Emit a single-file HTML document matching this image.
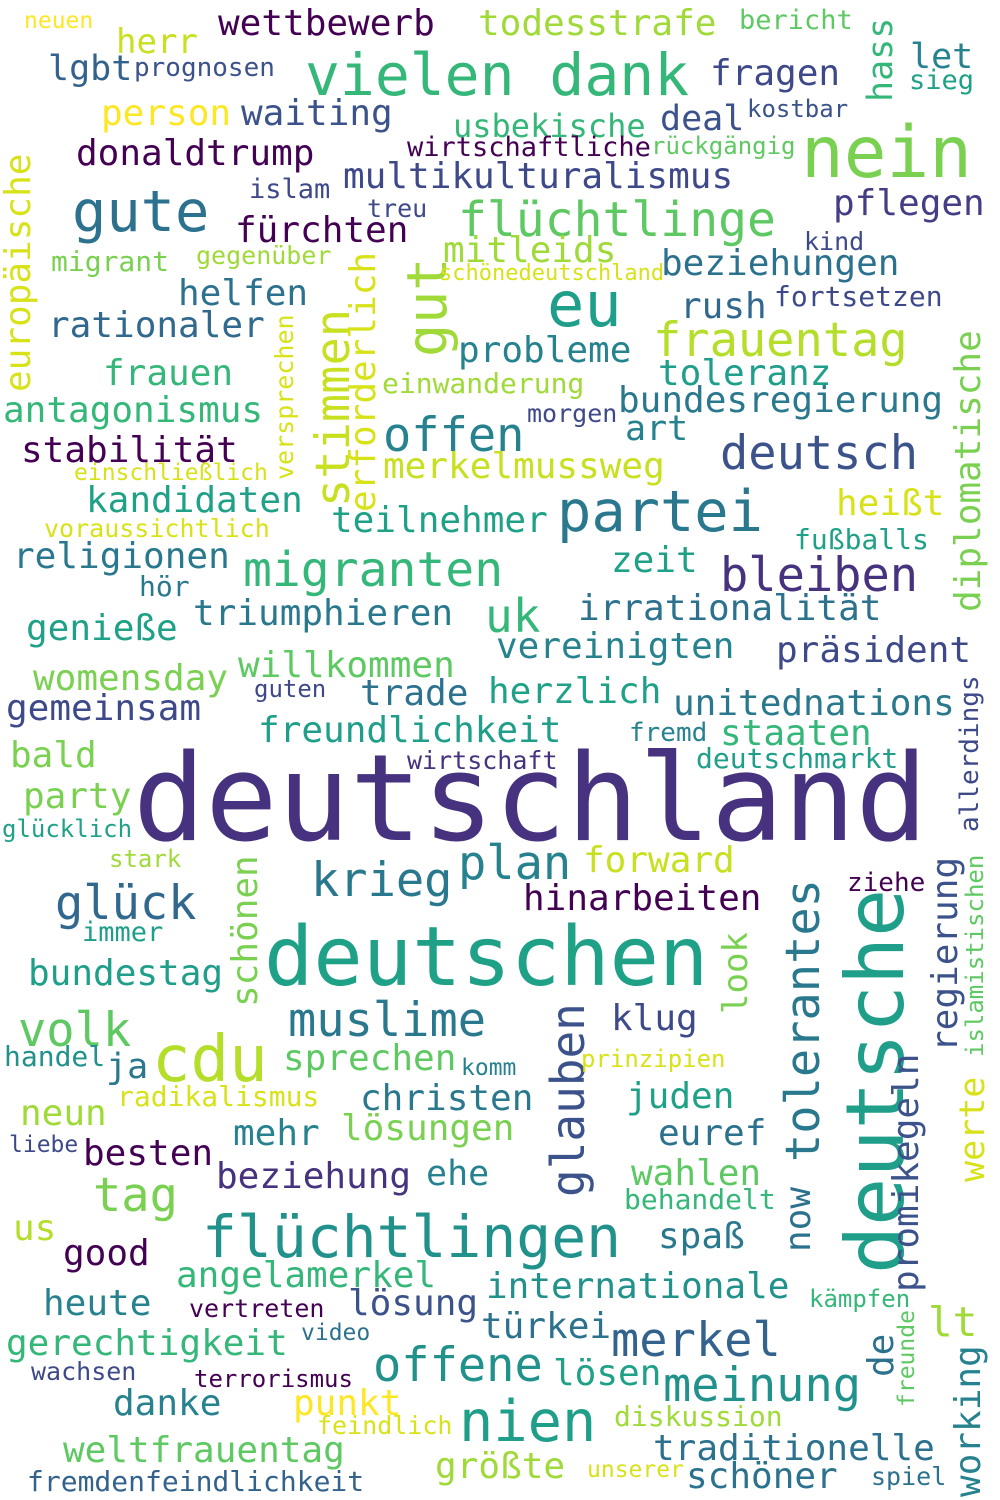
<!DOCTYPE html>
<html><head><meta charset="utf-8"><style>
html,body{margin:0;padding:0;background:#fff;}
body{width:1000px;height:1500px;position:relative;overflow:hidden;font-family:"DejaVu Sans Mono","Liberation Mono",monospace;}
div{position:absolute;line-height:1;white-space:nowrap;margin-top:2px;}
.v{transform-origin:0 0;transform:rotate(-90deg);}
</style></head><body>
<div style="left:133px;top:738px;font-size:120px;color:#46327e">deutschland</div>
<div style="left:264px;top:915px;font-size:82px;color:#1fa187">deutschen</div>
<div style="left:305px;top:44px;font-size:58px;color:#35b779">vielen dank</div>
<div style="left:801px;top:115px;font-size:71px;color:#7ad151">nein</div>
<div style="left:72px;top:182px;font-size:57px;color:#2c728e">gute</div>
<div style="left:547px;top:272px;font-size:62px;color:#1f9e89">eu</div>
<div style="left:458px;top:194px;font-size:48px;color:#5ec962">flüchtlinge</div>
<div style="left:557px;top:482px;font-size:57px;color:#2a788e">partei</div>
<div style="left:202px;top:1206px;font-size:58px;color:#21918c">flüchtlingen</div>
<div style="left:152px;top:1026px;font-size:64px;color:#b5de2b">cdu</div>
<div style="left:459px;top:1392px;font-size:57px;color:#1f9e89">nien</div>
<div style="left:373px;top:1340px;font-size:47px;color:#21918c">offene</div>
<div style="left:288px;top:995px;font-size:47px;color:#2a788e">muslime</div>
<div style="left:311px;top:855px;font-size:47px;color:#2a788e">krieg</div>
<div style="left:55px;top:878px;font-size:47px;color:#31688e">glück</div>
<div style="left:18px;top:1005px;font-size:47px;color:#5ec962">volk</div>
<div style="left:93px;top:1170px;font-size:47px;color:#7ad151">tag</div>
<div style="left:243px;top:544px;font-size:48px;color:#35b779">migranten</div>
<div style="left:383px;top:410px;font-size:47px;color:#26828e">offen</div>
<div style="left:720px;top:428px;font-size:47px;color:#3b528b">deutsch</div>
<div style="left:720px;top:550px;font-size:47px;color:#46327e">bleiben</div>
<div style="left:458px;top:838px;font-size:47px;color:#26828e">plan</div>
<div style="left:653px;top:315px;font-size:47px;color:#b5de2b">frauentag</div>
<div style="left:485px;top:591px;font-size:46px;color:#35b779">uk</div>
<div style="left:663px;top:1360px;font-size:47px;color:#21918c">meinung</div>
<div style="left:611px;top:1315px;font-size:47px;color:#33638d">merkel</div>
<div style="left:928px;top:1300px;font-size:41px;color:#a0da39">lt</div>

<div class="v" style="left:836px;top:1272px;font-size:80px;color:#1f9e89">deutsche</div>
<div class="v" style="left:400px;top:355px;font-size:55px;color:#a0da39">gut</div>
<div class="v" style="left:310px;top:505px;font-size:47px;color:#c8e020">stimmen</div>
<div class="v" style="left:780px;top:1160px;font-size:47px;color:#2a788e">tolerantes</div>
<div class="v" style="left:545px;top:1195px;font-size:46px;color:#3b528b">glauben</div>
<div class="v" style="left:951px;top:610px;font-size:36px;color:#7ad151">diplomatische</div>
<div class="v" style="left:1px;top:390px;font-size:36px;color:#d8e219">europäische</div>
<div class="v" style="left:346px;top:510px;font-size:36px;color:#d8e219">erforderlich</div>
<div class="v" style="left:864px;top:100px;font-size:35px;color:#35b779">hass</div>
<div class="v" style="left:272px;top:478px;font-size:25px;color:#d8e219">versprechen</div>
<div class="v" style="left:957px;top:830px;font-size:26px;color:#3e4989">allerdings</div>
<div class="v" style="left:963px;top:1055px;font-size:24px;color:#5ec962">islamistischen</div>
<div class="v" style="left:928px;top:1050px;font-size:36px;color:#3b528b">regierung</div>
<div class="v" style="left:228px;top:1005px;font-size:36px;color:#7ad151">schönen</div>
<div class="v" style="left:719px;top:1012px;font-size:34px;color:#7ad151">look</div>
<div class="v" style="left:889px;top:1290px;font-size:36px;color:#3b528b">promikegeln</div>
<div class="v" style="left:956px;top:1180px;font-size:35px;color:#d8e219">werte</div>
<div class="v" style="left:781px;top:1250px;font-size:36px;color:#2c728e">now</div>
<div class="v" style="left:864px;top:1375px;font-size:36px;color:#2c728e">de</div>
<div class="v" style="left:896px;top:1405px;font-size:23px;color:#5ec962">freunde</div>
<div class="v" style="left:951px;top:1495px;font-size:36px;color:#26828e">working</div>

<div style="left:218px;top:4px;font-size:36px;color:#440154">wettbewerb</div>
<div style="left:478px;top:4px;font-size:36px;color:#a0da39">todesstrafe</div>
<div style="left:116px;top:23px;font-size:34px;color:#c8e020">herr</div>
<div style="left:739px;top:5px;font-size:27px;color:#5ec962">bericht</div>
<div style="left:24px;top:8px;font-size:23px;color:#fde725">neuen</div>
<div style="left:910px;top:38px;font-size:35px;color:#26828e">let</div>
<div style="left:909px;top:65px;font-size:27px;color:#1fa187">sieg</div>
<div style="left:48px;top:50px;font-size:35px;color:#33638d">lgbt</div>
<div style="left:134px;top:53px;font-size:26px;color:#3b528b">prognosen</div>
<div style="left:710px;top:54px;font-size:36px;color:#3e4989">fragen</div>
<div style="left:101px;top:94px;font-size:36px;color:#fde725">person</div>
<div style="left:241px;top:94px;font-size:36px;color:#3b528b">waiting</div>
<div style="left:453px;top:108px;font-size:32px;color:#35b779">usbekische</div>
<div style="left:660px;top:100px;font-size:35px;color:#3b528b">deal</div>
<div style="left:747px;top:95px;font-size:24px;color:#3b528b">kostbar</div>
<div style="left:76px;top:134px;font-size:36px;color:#440154">donaldtrump</div>
<div style="left:407px;top:132px;font-size:27px;color:#440154">wirtschaftliche</div>
<div style="left:651px;top:132px;font-size:24px;color:#5ec962">rückgängig</div>
<div style="left:249px;top:174px;font-size:27px;color:#3e4989">islam</div>
<div style="left:343px;top:157px;font-size:36px;color:#3e4989">multikulturalismus</div>
<div style="left:367px;top:194px;font-size:25px;color:#3e4989">treu</div>
<div style="left:235px;top:211px;font-size:36px;color:#440154">fürchten</div>
<div style="left:833px;top:184px;font-size:36px;color:#433e85">pflegen</div>
<div style="left:804px;top:227px;font-size:25px;color:#3e4989">kind</div>
<div style="left:51px;top:246px;font-size:28px;color:#7ad151">migrant</div>
<div style="left:196px;top:241px;font-size:25px;color:#a0da39">gegenüber</div>
<div style="left:443px;top:231px;font-size:36px;color:#a0da39">mitleids</div>
<div style="left:439px;top:261px;font-size:22px;color:#d8e219">schönedeutschland</div>
<div style="left:661px;top:244px;font-size:36px;color:#2c728e">beziehungen</div>
<div style="left:178px;top:274px;font-size:36px;color:#2c728e">helfen</div>
<div style="left:680px;top:287px;font-size:36px;color:#31688e">rush</div>
<div style="left:774px;top:281px;font-size:28px;color:#3e4989">fortsetzen</div>
<div style="left:48px;top:306px;font-size:36px;color:#31688e">rationaler</div>
<div style="left:458px;top:331px;font-size:36px;color:#26828e">probleme</div>
<div style="left:103px;top:354px;font-size:36px;color:#35b779">frauen</div>
<div style="left:658px;top:354px;font-size:36px;color:#1f9e89">toleranz</div>
<div style="left:382px;top:368px;font-size:28px;color:#a0da39">einwanderung</div>
<div style="left:618px;top:381px;font-size:36px;color:#2a788e">bundesregierung</div>
<div style="left:3px;top:391px;font-size:36px;color:#35b779">antagonismus</div>
<div style="left:527px;top:399px;font-size:25px;color:#3e4989">morgen</div>
<div style="left:625px;top:410px;font-size:35px;color:#26828e">art</div>
<div style="left:21px;top:431px;font-size:36px;color:#440154">stabilität</div>
<div style="left:74px;top:460px;font-size:23px;color:#d8e219">einschließlich</div>
<div style="left:383px;top:447px;font-size:36px;color:#c8e020">merkelmussweg</div>
<div style="left:836px;top:484px;font-size:36px;color:#d8e219">heißt</div>
<div style="left:86px;top:481px;font-size:36px;color:#1fa187">kandidaten</div>
<div style="left:331px;top:501px;font-size:36px;color:#1fa187">teilnehmer</div>
<div style="left:44px;top:514px;font-size:25px;color:#d8e219">voraussichtlich</div>
<div style="left:794px;top:524px;font-size:28px;color:#1fa187">fußballs</div>
<div style="left:13px;top:537px;font-size:36px;color:#2a788e">religionen</div>
<div style="left:611px;top:541px;font-size:36px;color:#1fa187">zeit</div>
<div style="left:139px;top:571px;font-size:28px;color:#2a788e">hör</div>
<div style="left:578px;top:589px;font-size:36px;color:#2c728e">irrationalität</div>
<div style="left:193px;top:594px;font-size:36px;color:#2a788e">triumphieren</div>
<div style="left:26px;top:609px;font-size:36px;color:#1fa187">genieße</div>
<div style="left:496px;top:627px;font-size:36px;color:#26828e">vereinigten</div>
<div style="left:776px;top:631px;font-size:36px;color:#3e4989">präsident</div>
<div style="left:238px;top:646px;font-size:36px;color:#5ec962">willkommen</div>
<div style="left:33px;top:659px;font-size:36px;color:#7ad151">womensday</div>
<div style="left:254px;top:675px;font-size:24px;color:#3e4989">guten</div>
<div style="left:360px;top:674px;font-size:36px;color:#2c728e">trade</div>
<div style="left:488px;top:672px;font-size:36px;color:#1fa187">herzlich</div>
<div style="left:673px;top:684px;font-size:36px;color:#2a788e">unitednations</div>
<div style="left:6px;top:689px;font-size:36px;color:#3e4989">gemeinsam</div>
<div style="left:258px;top:711px;font-size:36px;color:#1f9e89">freundlichkeit</div>
<div style="left:629px;top:718px;font-size:26px;color:#26828e">fremd</div>
<div style="left:720px;top:714px;font-size:36px;color:#35b779">staaten</div>
<div style="left:10px;top:736px;font-size:36px;color:#7ad151">bald</div>
<div style="left:407px;top:746px;font-size:25px;color:#46327e">wirtschaft</div>
<div style="left:696px;top:743px;font-size:28px;color:#1f9e89">deutschmarkt</div>
<div style="left:23px;top:777px;font-size:36px;color:#7ad151">party</div>
<div style="left:2px;top:815px;font-size:24px;color:#1fa187">glücklich</div>
<div style="left:109px;top:845px;font-size:24px;color:#a0da39">stark</div>
<div style="left:583px;top:841px;font-size:36px;color:#c8e020">forward</div>
<div style="left:523px;top:879px;font-size:36px;color:#440154">hinarbeiten</div>
<div style="left:847px;top:868px;font-size:26px;color:#440154">ziehe</div>
<div style="left:82px;top:917px;font-size:27px;color:#1f9e89">immer</div>
<div style="left:28px;top:954px;font-size:36px;color:#1f9e89">bundestag</div>
<div style="left:611px;top:999px;font-size:36px;color:#3e4989">klug</div>
<div style="left:4px;top:1041px;font-size:28px;color:#21918c">handel</div>
<div style="left:106px;top:1048px;font-size:35px;color:#2a788e">ja</div>
<div style="left:283px;top:1039px;font-size:36px;color:#5ec962">sprechen</div>
<div style="left:461px;top:1055px;font-size:23px;color:#26828e">komm</div>
<div style="left:581px;top:1045px;font-size:24px;color:#d8e219">prinzipien</div>
<div style="left:117px;top:1081px;font-size:28px;color:#d8e219">radikalismus</div>
<div style="left:360px;top:1079px;font-size:36px;color:#2a788e">christen</div>
<div style="left:626px;top:1077px;font-size:36px;color:#1fa187">juden</div>
<div style="left:20px;top:1094px;font-size:36px;color:#a0da39">neun</div>
<div style="left:233px;top:1114px;font-size:36px;color:#26828e">mehr</div>
<div style="left:341px;top:1109px;font-size:36px;color:#7ad151">lösungen</div>
<div style="left:658px;top:1114px;font-size:36px;color:#2c728e">euref</div>
<div style="left:9px;top:1132px;font-size:23px;color:#3e4989">liebe</div>
<div style="left:83px;top:1134px;font-size:36px;color:#440154">besten</div>
<div style="left:216px;top:1157px;font-size:36px;color:#46327e">beziehung</div>
<div style="left:426px;top:1155px;font-size:35px;color:#26828e">ehe</div>
<div style="left:631px;top:1154px;font-size:36px;color:#5ec962">wahlen</div>
<div style="left:624px;top:1184px;font-size:28px;color:#35b779">behandelt</div>
<div style="left:13px;top:1209px;font-size:36px;color:#b5de2b">us</div>
<div style="left:63px;top:1234px;font-size:36px;color:#440154">good</div>
<div style="left:658px;top:1217px;font-size:36px;color:#2a788e">spaß</div>
<div style="left:176px;top:1256px;font-size:36px;color:#35b779">angelamerkel</div>
<div style="left:486px;top:1267px;font-size:36px;color:#21918c">internationale</div>
<div style="left:43px;top:1284px;font-size:36px;color:#26828e">heute</div>
<div style="left:189px;top:1294px;font-size:25px;color:#440154">vertreten</div>
<div style="left:348px;top:1284px;font-size:36px;color:#3b528b">lösung</div>
<div style="left:809px;top:1285px;font-size:24px;color:#35b779">kämpfen</div>
<div style="left:481px;top:1307px;font-size:36px;color:#2c728e">türkei</div>
<div style="left:6px;top:1324px;font-size:36px;color:#35b779">gerechtigkeit</div>
<div style="left:301px;top:1320px;font-size:23px;color:#2c728e">video</div>
<div style="left:31px;top:1357px;font-size:25px;color:#3e4989">wachsen</div>
<div style="left:194px;top:1365px;font-size:24px;color:#440154">terrorismus</div>
<div style="left:553px;top:1354px;font-size:36px;color:#1fa187">lösen</div>
<div style="left:113px;top:1384px;font-size:36px;color:#26828e">danke</div>
<div style="left:293px;top:1384px;font-size:36px;color:#fde725">punkt</div>
<div style="left:317px;top:1411px;font-size:25px;color:#d8e219">feindlich</div>
<div style="left:614px;top:1401px;font-size:28px;color:#a0da39">diskussion</div>
<div style="left:63px;top:1431px;font-size:36px;color:#5ec962">weltfrauentag</div>
<div style="left:653px;top:1429px;font-size:36px;color:#2c728e">traditionelle</div>
<div style="left:435px;top:1447px;font-size:36px;color:#a0da39">größte</div>
<div style="left:587px;top:1457px;font-size:23px;color:#d8e219">unserer</div>
<div style="left:686px;top:1457px;font-size:36px;color:#2c728e">schöner</div>
<div style="left:871px;top:1462px;font-size:25px;color:#2c728e">spiel</div>
<div style="left:27px;top:1466px;font-size:28px;color:#33638d">fremdenfeindlichkeit</div>
</body></html>
